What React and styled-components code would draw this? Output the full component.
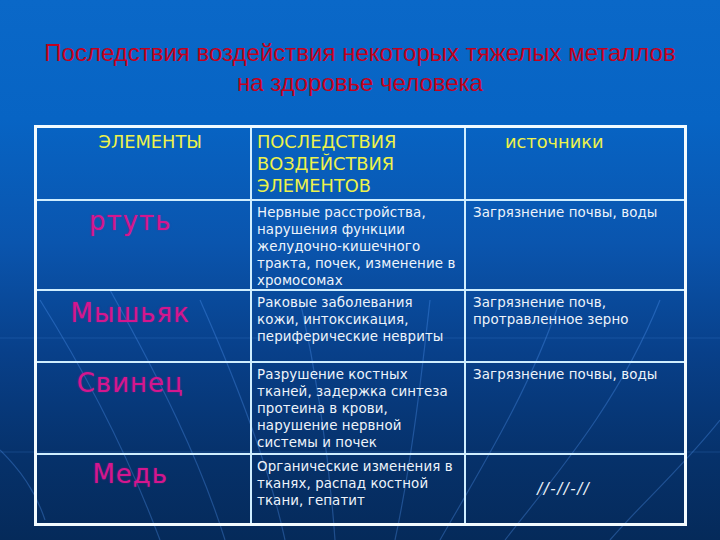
import React from 'react';
import styled, { createGlobalStyle } from 'styled-components';

const curves = encodeURIComponent(`
<svg xmlns="http://www.w3.org/2000/svg" width="720" height="540" viewBox="0 0 720 540">
  <g fill="none" stroke="#5aa0ff" stroke-width="1.2" opacity="0.3">
    <path d="M40 300 C 90 380, 130 460, 160 540"/>
    <path d="M110 290 C 160 380, 200 460, 225 540"/>
    <path d="M200 300 C 240 390, 270 470, 285 540"/>
    <path d="M300 300 C 320 390, 330 470, 335 540"/>
    <path d="M430 300 C 420 390, 410 470, 395 540"/>
    <path d="M560 300 C 530 390, 480 470, 440 540"/>
    <path d="M660 300 C 620 400, 560 470, 505 540"/>
    <path d="M720 420 C 680 470, 640 505, 610 540"/>
    <path d="M0 450 C 20 470, 35 490, 45 520"/>
  </g>
  <g stroke="#4d8fe0" stroke-width="1" opacity="0.22">
    <line x1="0" y1="338" x2="720" y2="338"/>
    <line x1="0" y1="452" x2="720" y2="452"/>
  </g>
</svg>`);

const GlobalStyle = createGlobalStyle`
  html, body {
    margin: 0;
    padding: 0;
    background: #062a5a;
  }
`;

const Slide = styled.div`
  width: 720px;
  height: 540px;
  overflow: hidden;
  box-sizing: border-box;
  padding-top: 38px;
  background-image: url("data:image/svg+xml,${curves}"),
    linear-gradient(to bottom, #0a68c8 0%, #0764c4 22%, #0a55ae 45%, #08408a 65%, #06316a 85%, #052a5a 100%);
  display: flex;
  flex-direction: column;
  align-items: center;
`;

const Title = styled.h1`
  margin: 0;
  font-family: "Liberation Sans", Arial, sans-serif;
  font-weight: normal;
  font-size: 24px;
  line-height: 30px;
  color: #c4001c;
  text-align: center;
`;

const Grid = styled.table`
  margin-top: 27px;
  border-collapse: collapse;
  table-layout: fixed;
  border: 3px solid #f2fbff;
  font-family: "DejaVu Sans", Verdana, sans-serif;
`;

const Cell = styled.td`
  border: 2px solid #cfeeff;
  vertical-align: ${p => (p.middle ? 'middle' : 'top')};
  padding: 0;
  box-sizing: border-box;
`;

const HeadText = styled.div`
  color: #eef24a;
  font-size: 17.8px;
  line-height: 22px;
  padding: 3px 0 0 ${p => p.indent || '5px'};
  white-space: nowrap;
`;

const Element = styled.div`
  color: #d4168e;
  font-size: 26px;
  line-height: 30px;
  letter-spacing: 1px;
  text-align: center;
  padding: ${p => p.top} 26px 0 0;
  text-shadow: 0 0 2px rgba(200, 20, 140, 0.5);
`;

const Body = styled.div`
  color: #eef4fb;
  font-size: 13.4px;
  line-height: 17px;
  padding: 3px 7px 0 ${p => p.indent || '5px'};
  letter-spacing: 0.1px;
`;

const Ditto = styled.div`
  color: #eef4fb;
  font-size: 15px;
  letter-spacing: 1.5px;
  font-style: italic;
  text-align: center;
  padding-right: 22px;
`;

const rows = [
  {
    name: 'ртуть',
    h: 90,
    top: '5px',
    effect: 'Нервные расстройства, нарушения функции желудочно-кишечного тракта, почек, изменение в хромосомах',
    source: 'Загрязнение почвы, воды',
  },
  {
    name: 'Мышьяк',
    h: 72,
    top: '7px',
    effect: 'Раковые заболевания кожи, интоксикация, периферические невриты',
    source: 'Загрязнение почв, протравленное зерно',
  },
  {
    name: 'Свинец',
    h: 92,
    top: '5px',
    effect: 'Разрушение костных тканей, задержка синтеза протеина в крови, нарушение нервной системы и почек',
    source: 'Загрязнение почвы, воды',
  },
  {
    name: 'Медь',
    h: 71,
    top: '4px',
    effect: 'Органические изменения в тканях, распад костной ткани, гепатит',
    source: null,
  },
];

const App = () => (
  <>
    <GlobalStyle />
    <Slide>
      <Title>
        Последствия воздействия некоторых тяжелых металлов
        <br />
        на здоровье человека
      </Title>
      <Grid>
        <colgroup>
          <col style={{ width: 216 }} />
          <col style={{ width: 214 }} />
          <col style={{ width: 220 }} />
        </colgroup>
        <tbody>
          <tr style={{ height: 73 }}>
            <Cell>
              <HeadText indent="62px">ЭЛЕМЕНТЫ</HeadText>
            </Cell>
            <Cell>
              <HeadText>
                ПОСЛЕДСТВИЯ
                <br />
                ВОЗДЕЙСТВИЯ
                <br />
                ЭЛЕМЕНТОВ
              </HeadText>
            </Cell>
            <Cell>
              <HeadText indent="39px">источники</HeadText>
            </Cell>
          </tr>
          {rows.map(r => (
            <tr key={r.name} style={{ height: r.h }}>
              <Cell>
                <Element top={r.top}>{r.name}</Element>
              </Cell>
              <Cell>
                <Body>{r.effect}</Body>
              </Cell>
              {r.source ? (
                <Cell>
                  <Body indent="7px">{r.source}</Body>
                </Cell>
              ) : (
                <Cell middle>
                  <Ditto>//-//-//</Ditto>
                </Cell>
              )}
            </tr>
          ))}
        </tbody>
      </Grid>
    </Slide>
  </>
);

export default App;
